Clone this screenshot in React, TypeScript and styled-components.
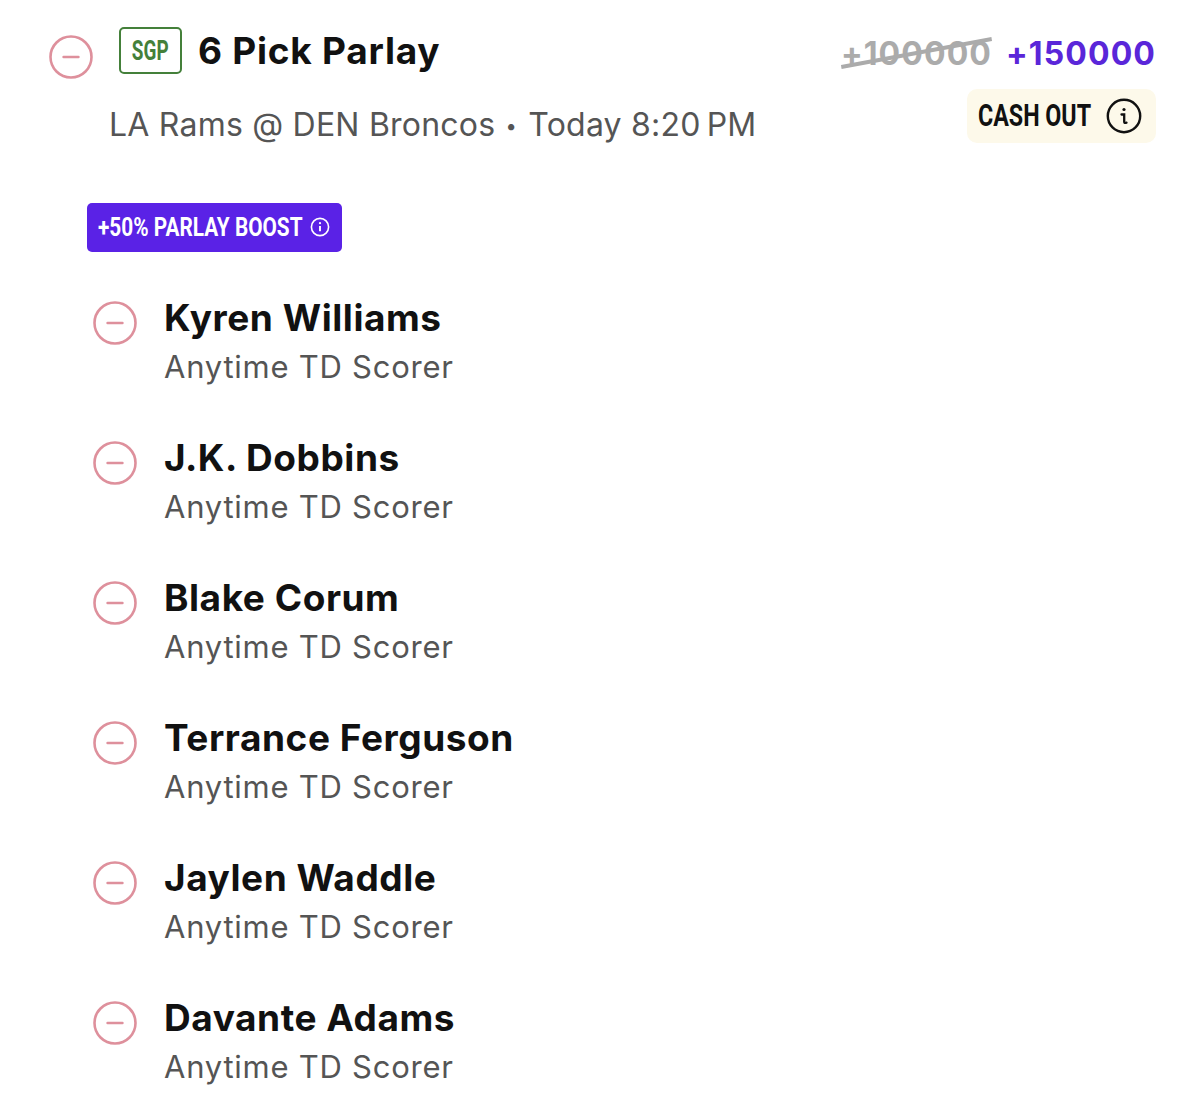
import React from 'react';
import styled, { createGlobalStyle } from 'styled-components';

const GlobalStyle = createGlobalStyle`
  html, body {
    margin: 0;
    padding: 0;
    background: #fff;
    font-family: Inter, "Liberation Sans", sans-serif;
  }
`;

const Page = styled.div`
  width: 1200px;
  height: 1115px;
  overflow: hidden;
  box-sizing: border-box;
  padding: 27px 44px 0 49px;
`;

const Header = styled.header`
  display: flex;
  justify-content: space-between;
  align-items: flex-start;
  height: 176px;
`;

const HeaderLeft = styled.div`
  display: flex;
  flex-direction: column;
`;

const TitleRow = styled.div`
  display: flex;
  align-items: flex-start;
`;

const RemoveCircle = styled.svg<{ $top?: number }>`
  display: block;
  flex: none;
  width: 44px;
  height: 44px;
  margin-top: ${(p) => p.$top ?? 0}px;
`;

const SgpBadge = styled.div`
  box-sizing: border-box;
  width: 63px;
  height: 47px;
  margin-left: 26px;
  border: 2.5px solid #44803a;
  border-radius: 5px;
  display: flex;
  align-items: center;
  justify-content: center;
`;

const Condensed = styled.span<{ $scale: number }>`
  display: inline-block;
  white-space: nowrap;
  transform: scaleX(${(p) => p.$scale});
`;

const SgpText = styled(Condensed)`
  font-family: Roboto, sans-serif;
  font-size: 27px;
  font-weight: 700;
  color: #44803a;
`;

const Title = styled.h1`
  margin: 0 0 0 16px;
  font-size: 37px;
  line-height: 48px;
  font-weight: 700;
  letter-spacing: 0.75px;
  color: #111;
`;

const Matchup = styled.div`
  margin: 26px 0 0 60px;
  font-size: 32px;
  line-height: 40px;
  color: #555;
  letter-spacing: 0.22px;
  white-space: nowrap;
`;

const Dot = styled.span`
  font-size: 20px;
  vertical-align: 3px;
  margin: 0 2px 0 1px;
`;

const HeaderRight = styled.div`
  display: flex;
  flex-direction: column;
  align-items: flex-end;
`;

const Odds = styled.div`
  display: flex;
  align-items: center;
  gap: 14px;
  height: 50px;
  padding-top: 1px;
  margin-bottom: -1px;
  font-size: 32px;
  font-weight: 700;
  letter-spacing: 1.1px;
`;

const OldOdds = styled.span`
  position: relative;
  color: #ababab;
  &::after {
    content: "";
    position: absolute;
    left: -1px;
    right: -1px;
    top: 50%;
    margin-top: -2px;
    height: 4px;
    background: #ababab;
    transform: rotate(-10.5deg);
  }
`;

const NewOdds = styled.span`
  color: #5a26d9;
`;

const CashOut = styled.div`
  box-sizing: border-box;
  width: 189px;
  height: 54px;
  margin-top: 12px;
  padding-left: 11px;
  background: #fdf9ea;
  border-radius: 10px;
  display: flex;
  align-items: center;
  color: #111;
`;

const CashText = styled(Condensed)`
  font-family: Roboto, sans-serif;
  font-size: 31px;
  font-weight: 700;
  line-height: 52px;
  transform-origin: left center;
  width: 113px;
`;

const CashIcon = styled.svg`
  flex: none;
  width: 36px;
  height: 36px;
  margin-left: 15px;
`;

const BoostBadge = styled.div`
  box-sizing: border-box;
  width: 255px;
  height: 49px;
  margin-left: 38px;
  padding: 0 0 1px 11px;
  background: #5a22e6;
  border-radius: 5px;
  color: #fff;
  display: flex;
  align-items: center;
`;

const BoostText = styled(Condensed)`
  font-family: Roboto, sans-serif;
  font-size: 26px;
  font-weight: 700;
  transform-origin: left center;
  width: 204px;
`;

const BoostIcon = styled.svg`
  flex: none;
  width: 20px;
  height: 20px;
  margin-left: 8px;
`;

const LegList = styled.div`
  display: flex;
  flex-direction: column;
  gap: 40px;
  margin: 43px 0 0 44px;
`;

const Leg = styled.div`
  display: flex;
  height: 100px;
`;

const LegBody = styled.div`
  margin-left: 27px;
`;

const LegName = styled.div`
  font-size: 37px;
  line-height: 48px;
  font-weight: 700;
  letter-spacing: 0.55px;
  color: #111;
  margin-top: -1px;
`;

const LegMarket = styled.div`
  font-size: 31px;
  line-height: 40px;
  margin-top: 5px;
  color: #555;
  letter-spacing: 0.75px;
`;

const legs = [
  'Kyren Williams',
  'J.K. Dobbins',
  'Blake Corum',
  'Terrance Ferguson',
  'Jaylen Waddle',
  'Davante Adams',
];

const MinusIcon: React.FC<{ top?: number }> = ({ top }) => (
  <RemoveCircle $top={top} viewBox="0 0 44 44" fill="none" stroke="#de909c">
    <circle cx="22" cy="22" r="20.5" strokeWidth="2.6" />
    <path d="M14.5 22h15" strokeWidth="2.4" strokeLinecap="round" />
  </RemoveCircle>
);

const App: React.FC = () => {
  return (
    <Page>
      <GlobalStyle />
      <Header>
        <HeaderLeft>
          <TitleRow>
            <MinusIcon top={8} />
            <SgpBadge>
              <SgpText $scale={0.7}>SGP</SgpText>
            </SgpBadge>
            <Title>6 Pick Parlay</Title>
          </TitleRow>
          <Matchup>
            LA Rams @ DEN Broncos <Dot>•</Dot> Today 8:20{'\u2009'}PM
          </Matchup>
        </HeaderLeft>
        <HeaderRight>
          <Odds>
            <OldOdds>+100000</OldOdds>
            <NewOdds>+150000</NewOdds>
          </Odds>
          <CashOut>
            <CashText $scale={0.75}>CASH OUT</CashText>
            <CashIcon viewBox="0 0 36 36" fill="none" stroke="#111">
              <circle cx="18" cy="18" r="16.2" strokeWidth="2.4" />
              <circle cx="18" cy="11.5" r="1.6" fill="#111" stroke="none" />
              <path d="M15.5 16.5h2.7v7.2c0 1.2.8 1.5 2.3 1" strokeWidth="2.3" strokeLinecap="round" />
            </CashIcon>
          </CashOut>
        </HeaderRight>
      </Header>
      <BoostBadge>
        <BoostText $scale={0.8}>+50% PARLAY BOOST</BoostText>
        <BoostIcon viewBox="0 0 20 20" fill="none" stroke="#fff">
          <circle cx="10" cy="10" r="8.6" strokeWidth="1.6" />
          <circle cx="10" cy="6.2" r="1.1" fill="#fff" stroke="none" />
          <path d="M10 9v5.2" strokeWidth="1.9" />
        </BoostIcon>
      </BoostBadge>
      <LegList>
        {legs.map((name) => (
          <Leg key={name}>
            <MinusIcon top={6} />
            <LegBody>
              <LegName>{name}</LegName>
              <LegMarket>Anytime TD Scorer</LegMarket>
            </LegBody>
          </Leg>
        ))}
      </LegList>
    </Page>
  );
};

export default App;
